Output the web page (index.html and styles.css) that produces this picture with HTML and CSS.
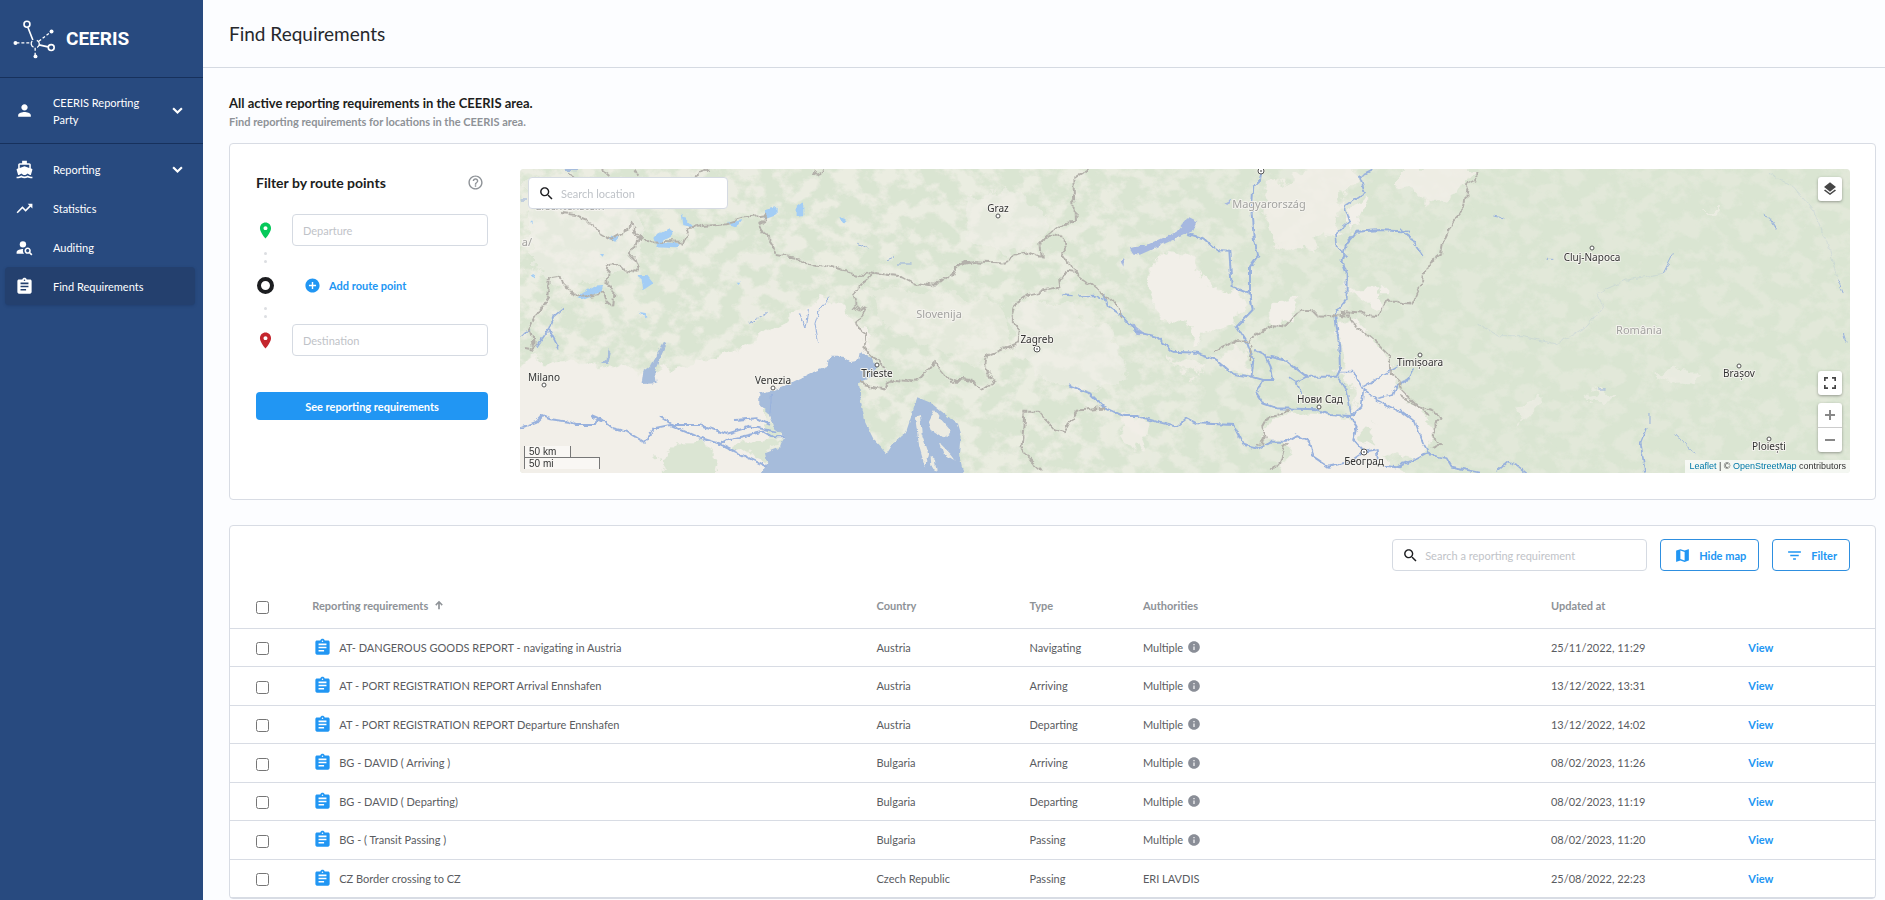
FILE: index.html
```html
<!DOCTYPE html>
<html lang="en">
<head>
  <meta charset="UTF-8" />
  <meta name="viewport" content="width=device-width, initial-scale=1.0" />
  <title>Find Requirements - CEERIS</title>
  <link rel="stylesheet" href="styles.css">
</head>
<body>
  <!-- icon set -->
  <svg class="sprite" aria-hidden="true">
    <symbol id="i-person" viewBox="0 0 24 24"><path d="M12 12c2.21 0 4-1.79 4-4s-1.79-4-4-4-4 1.79-4 4 1.79 4 4 4zm0 2c-2.67 0-8 1.34-8 4v2h16v-2c0-2.66-5.33-4-8-4z"/></symbol>
    <symbol id="i-chevron" viewBox="0 0 24 24"><path d="M16.59 8.09 12 12.67 7.41 8.09 5.5 10l6.5 6.5 6.5-6.5z"/></symbol>
    <symbol id="i-boat" viewBox="0 0 24 24"><path d="M20 21c-1.39 0-2.78-.47-4-1.32-2.44 1.71-5.56 1.71-8 0C6.78 20.53 5.39 21 4 21H2v2h2c1.38 0 2.74-.35 4-.99 2.52 1.29 5.48 1.29 8 0 1.26.65 2.62.99 4 .99h2v-2h-2zM3.95 19H4c1.6 0 3.02-.88 4-2 .98 1.12 2.4 2 4 2s3.02-.88 4-2c.98 1.12 2.4 2 4 2h.05l1.89-6.68c.08-.26.06-.54-.06-.78s-.34-.42-.6-.5L20 10.62V6c0-1.1-.9-2-2-2h-3V1H9v3H6c-1.1 0-2 .9-2 2v4.62l-1.29.42c-.26.08-.48.26-.6.5s-.15.52-.06.78L3.95 19zM6 6h12v3.97L12 8 6 9.97V6z"/></symbol>
    <symbol id="i-trend" viewBox="0 0 24 24"><path d="M16 6l2.29 2.29-4.88 4.88-4-4L2 16.59 3.41 18l6-6 4 4 6.3-6.29L22 12V6z"/></symbol>
    <symbol id="i-audit" viewBox="0 0 24 24"><circle cx="10" cy="8" r="4"/><path d="M10.35 14.01C7.62 13.91 2 15.27 2 18v2h9.54c-2.47-2.76-1.23-5.89-1.19-5.99zM19.43 18.02c.36-.59.57-1.28.57-2.02 0-2.21-1.79-4-4-4s-4 1.79-4 4 1.79 4 4 4c.74 0 1.43-.22 2.02-.57L20.59 22 22 20.59l-2.57-2.57zM16 18c-1.1 0-2-.9-2-2s.9-2 2-2 2 .9 2 2-.9 2-2 2z"/></symbol>
    <symbol id="i-report" viewBox="0 0 24 24"><path d="M19 3h-4.18C14.4 1.84 13.3 1 12 1c-1.3 0-2.4.84-2.82 2H5c-1.1 0-2 .9-2 2v14c0 1.1.9 2 2 2h14c1.1 0 2-.9 2-2V5c0-1.1-.9-2-2-2zm-7 0c.55 0 1 .45 1 1s-.45 1-1 1-1-.45-1-1 .45-1 1-1zm2 14H7v-2h7v2zm3-4H7v-2h10v2zm0-4H7V7h10v2z"/></symbol>
    <symbol id="i-pin" viewBox="0 0 24 24"><path d="M12 2C8.13 2 5 5.13 5 9c0 5.25 7 13 7 13s7-7.75 7-13c0-3.87-3.13-7-7-7zm0 9.5c-1.38 0-2.5-1.12-2.5-2.5s1.12-2.5 2.5-2.5 2.5 1.12 2.5 2.5-1.12 2.5-2.5 2.5z"/></symbol>
    <symbol id="i-help" viewBox="0 0 24 24"><path d="M11 18h2v-2h-2v2zm1-16C6.48 2 2 6.48 2 12s4.48 10 10 10 10-4.48 10-10S17.52 2 12 2zm0 18c-4.41 0-8-3.59-8-8s3.59-8 8-8 8 3.59 8 8-3.59 8-8 8zm0-14c-2.21 0-4 1.79-4 4h2c0-1.1.9-2 2-2s2 .9 2 2c0 2-3 1.75-3 5h2c0-2.25 3-2.5 3-5 0-2.21-1.79-4-4-4z"/></symbol>
    <symbol id="i-add" viewBox="0 0 24 24"><path d="M12 2C6.48 2 2 6.48 2 12s4.48 10 10 10 10-4.48 10-10S17.52 2 12 2zm5 11h-4v4h-2v-4H7v-2h4V7h2v4h4v2z"/></symbol>
    <symbol id="i-search" viewBox="0 0 24 24"><path d="M15.5 14h-.79l-.28-.27C15.41 12.59 16 11.11 16 9.5 16 5.91 13.09 3 9.5 3S3 5.91 3 9.5 5.91 16 9.5 16c1.61 0 3.09-.59 4.23-1.57l.27.28v.79l5 4.99L20.49 19l-4.99-5zm-6 0C7.01 14 5 11.99 5 9.5S7.01 5 9.5 5 14 7.01 14 9.5 11.99 14 9.5 14z"/></symbol>
    <symbol id="i-map" viewBox="0 0 24 24"><path d="M20.5 3l-.16.03L15 5.1 9 3 3.36 4.9c-.21.07-.36.25-.36.48V20.500c0 .28.22.5.5.5l.16-.03L9 18.900l6 2.100 5.640-1.900c.21-.07.36-.25.36-.48V3.500c0-.28-.22-.5-.5-.5zM15 19l-6-2.110V5l6 2.110V19z"/></symbol>
    <symbol id="i-filter" viewBox="0 0 24 24"><path d="M10 18h4v-2h-4v2zM3 6v2h18V6H3zm3 7h12v-2H6v2z"/></symbol>
    <symbol id="i-info" viewBox="0 0 24 24"><path d="M12 2C6.48 2 2 6.48 2 12s4.48 10 10 10 10-4.48 10-10S17.52 2 12 2zm1 15h-2v-6h2v6zm0-8h-2V7h2v2z"/></symbol>
    <symbol id="i-layers" viewBox="0 0 24 24"><path d="M11.99 18.540l-7.370-5.730L3 14.070l9 7 9-7-1.630-1.270-7.380 5.740zM12 16l7.360-5.730L21 9l-9-7-9 7 1.630 1.270L12 16z"/></symbol>
    <symbol id="i-full" viewBox="0 0 24 24"><path d="M3 3h6v2.500H5.500V9H3zM15 3h6v6h-2.500V5.500H15zM3 15h2.500v3.500H9V21H3zM18.500 15H21v6h-6v-2.500h3.500z"/></symbol>
    <symbol id="i-up" viewBox="0 0 24 24"><path d="M3 11l2.500 2.500L10 9V22h4V9l4.500 4.500L21 11l-9-9z"/></symbol>
  </svg>

  <aside class="sidebar">
    <a class="brand" href="#">
      <svg class="brand-mark" viewBox="40 52 130 122" aria-hidden="true">
        <g fill="none" stroke="#fff" stroke-width="5">
          <circle cx="82" cy="68" r="9"/>
          <circle cx="156" cy="139" r="9"/>
          <path d="M85 78l15 38M119 131l27 6"/>
          <path d="M50 125h44M118 120l36-28M107 140v22" stroke-dasharray="9 6" stroke-width="4"/>
          <path d="M98 119a12 12 0 0 0 4 19M112 117a12 12 0 0 1 1 22" stroke-width="4"/>
        </g>
        <g fill="#fff">
          <circle cx="47" cy="125" r="6"/>
          <circle cx="157" cy="90" r="6"/>
          <circle cx="108" cy="166" r="6"/>
        </g>
      </svg>
      <span class="brand-name">CEERIS</span>
    </a>

    <button class="account" type="button">
      <svg class="icon"><use href="#i-person"/></svg>
      <span class="nav-label">CEERIS Reporting Party</span>
      <svg class="icon"><use href="#i-chevron"/></svg>
    </button>

    <nav class="nav">
      <button class="nav-item" type="button">
        <svg class="icon"><use href="#i-boat"/></svg>
        <span class="nav-label">Reporting</span>
        <svg class="icon"><use href="#i-chevron"/></svg>
      </button>
      <a class="nav-item" href="#"><svg class="icon"><use href="#i-trend"/></svg><span class="nav-label">Statistics</span></a>
      <a class="nav-item" href="#"><svg class="icon"><use href="#i-audit"/></svg><span class="nav-label">Auditing</span></a>
      <a class="nav-item active" href="#"><svg class="icon"><use href="#i-report"/></svg><span class="nav-label">Find Requirements</span></a>
    </nav>
  </aside>

  <main class="main">
    <header class="page-header">
      <h1>Find Requirements</h1>
    </header>

    <div class="content">
      <h2 class="intro-title">All active reporting requirements in the CEERIS area.</h2>
      <p class="intro-text">Find reporting requirements for locations in the CEERIS area.</p>

      <section class="card route-card">
        <form class="route-form">
          <div class="route-head">
            <h3>Filter by route points</h3>
            <svg class="icon-sm help"><use href="#i-help"/></svg>
          </div>
          <div class="route-row">
            <svg class="icon pin-start"><use href="#i-pin"/></svg>
            <input class="field" type="text" placeholder="Departure" aria-label="Departure">
          </div>
          <div class="dots"><span></span><span></span></div>
          <div class="route-row">
            <span class="ring"></span>
            <button class="add-point" type="button">
              <svg class="icon-sm"><use href="#i-add"/></svg>
              Add route point
            </button>
          </div>
          <div class="dots"><span></span><span></span></div>
          <div class="route-row">
            <svg class="icon pin-end"><use href="#i-pin"/></svg>
            <input class="field" type="text" placeholder="Destination" aria-label="Destination">
          </div>
          <button class="submit" type="button">See reporting requirements</button>
        </form>

        <div class="map">
          <svg class="map-canvas" viewBox="0 0 1330 304" preserveAspectRatio="xMidYMid slice" role="img" aria-label="Map">
            <defs>
              <filter id="hills" x="0" y="0" width="100%" height="100%" color-interpolation-filters="sRGB">
                <feTurbulence type="fractalNoise" baseFrequency="0.05 0.06" numOctaves="5" seed="7"/>
                <feColorMatrix values="0 0 0 0 .95  0 0 0 0 .94  0 0 0 0 .91  5 0 0 0 -2.1"/>
              </filter>
              <filter id="rough" x="-10%" y="-10%" width="120%" height="120%">
                <feTurbulence type="fractalNoise" baseFrequency="0.02" numOctaves="5" seed="3"/>
                <feDisplacementMap in="SourceGraphic" scale="70" xChannelSelector="R" yChannelSelector="G"/>
              </filter>
              <filter id="coast" x="-5%" y="-5%" width="110%" height="110%">
                <feTurbulence type="fractalNoise" baseFrequency="0.05" numOctaves="3" seed="5"/>
                <feDisplacementMap in="SourceGraphic" scale="14" xChannelSelector="R" yChannelSelector="G"/>
              </filter>
              <linearGradient id="fade">
                <stop offset="0" stop-color="#bbb"/>
                <stop offset=".42" stop-color="#aaa"/>
                <stop offset=".55" stop-color="#777"/>
                <stop offset=".7" stop-color="#555"/>
                <stop offset="1" stop-color="#555"/>
              </linearGradient>
              <mask id="west"><rect width="1330" height="304" fill="url(#fade)"/></mask>
            </defs>

            <rect width="1330" height="304" fill="#dae5d2"/>
            <g mask="url(#west)"><rect width="1330" height="304" filter="url(#hills)"/></g>

            <!-- plains -->
            <g transform="translate(-10 -9) scale(.3333)" fill="#f2efe9" filter="url(#rough)">
              <path d="M0 600L120 610 300 620 400 640 560 610 700 560 800 510 860 450 930 415 1010 440 1060 520 1070 600 900 680 770 720 780 980H0z"/>
              <path d="M60 60L330 70 400 200 370 320 200 380 60 330z" opacity=".5"/>
              <path d="M1080 380L1300 400 1480 440 1500 560 1400 620 1250 560 1120 500z" opacity=".4"/>
              <path d="M470 980L450 900 500 850 580 850 640 890 620 980zM660 870L700 840 810 835 800 870 770 900 720 885z" fill="#dbe5d3"/>
            </g>
            <g transform="translate(430 -9) scale(.3333)" fill="#f2efe9" filter="url(#rough)">
              <path d="M590 330L640 280 730 290 760 370 880 400 860 490 720 560 740 490 630 480z"/>
              <path d="M950 80L1100 20 1230 20 1180 120 1160 220 1060 270 1000 270 940 150z" opacity=".8"/>
              <path d="M970 430L1040 410 1030 480 960 490zM1200 380L1300 375 1300 440 1220 440zM1190 150L1240 110 1235 170 1200 210z"/>
              <path d="M1175 470L1220 490 1320 590 1320 650 1380 710 1440 770 1445 850 1390 900 1300 880 1380 960 1000 960 1010 850 940 840 960 770 1200 770 1220 700 1170 640z"/>
              <path d="M190 450L340 420 480 520 550 640 420 700 250 640 190 560zM40 120L220 90 300 200 200 290 60 250z" opacity=".5"/>
              <path d="M650 590L760 620 740 660 670 630zM800 600L850 550 890 560 900 640 840 630zM520 760L600 770 580 880 530 850z" opacity=".8"/>
              <path d="M1230 800L1280 800 1270 850 1230 840z" fill="#dbe5d3"/>
              <path d="M1350 20L1580 20 1530 100 1470 130 1350 80z" opacity=".8"/>
            </g>
            <g transform="translate(880 -9) scale(.3333)" fill="#efeee6" filter="url(#rough)" opacity=".7">
              <path d="M750 640L820 620 900 640 890 670 800 660zM550 710L620 690 640 710 580 725zM350 740L420 710 430 725 350 800zM900 150L960 150 940 165z"/>
            </g>

            <!-- sea, lakes -->
            <g transform="translate(-10 -9) scale(.3333)" fill="#a6bcdb" filter="url(#coast)">
              <path d="M742 960L772 910 765 880 805 865 825 830 790 800 775 760 748 735 748 700 790 690 850 665 900 640 950 622 960 590 1000 590 1020 603 1048 598 1052 578 1088 592 1102 628 1085 652 1047 667 1052 720 1067 790 1092 840 1130 882 1150 850 1187 820 1207 760 1222 712 1262 728 1292 752 1340 790 1352 830 1347 880 1365 960z"/>
              <path d="M462 545L470 550 435 630 440 670 395 672 400 635 420 620zM292 568L302 580 295 612 276 612 290 600z"/>
              <path d="M160 20L205 20 200 34 165 33z"/>
            </g>
            <g transform="translate(-10 -9) scale(.3333)" fill="#ecebe2" filter="url(#coast)">
              <path d="M1215 770L1230 765 1235 820 1255 880 1245 920 1228 860zM1255 790L1275 750 1295 780 1325 815 1300 835 1262 810zM1290 850L1325 885 1340 905 1300 880zM1262 890L1275 900 1280 935 1265 925z"/>
            </g>
            <g transform="translate(-10 -9) scale(.3333)" fill="#a3cdf5" filter="url(#coast)">
              <path d="M430 230L480 205 485 225 455 245 505 250 500 265 440 262zM290 232L330 228 315 245zM515 160L530 180 555 205 520 195zM650 190L695 180 680 200zM765 150L800 140 800 165 765 178zM860 140L880 125 880 165 860 168zM985 170L1010 180 1000 190zM375 345L410 345 430 370 400 390 395 360zM200 410L250 380 278 378 275 395 215 418zM385 455L410 460 412 475zM60 185l8 0 0 8zM65 345l14-4-6 14zM270 285l12 0-4 8zM680 365l10 0-3 8z"/>
            </g>
            <g transform="translate(430 -9) scale(.3333)" fill="#a6b8e0" filter="url(#coast)">
              <path d="M540 265L600 252 680 215 715 172 742 185 730 212 690 230 620 262 570 284 545 280zM822 128L848 114 830 134zM545 490L590 524 560 526zM512 300l12-6-4 26z"/>
            </g>

            <!-- rivers -->
            <g transform="translate(-10 -9) scale(.3333)" fill="none" stroke="#98b1dd" stroke-width="6" filter="url(#coast)">
              <path d="M30 805L80 785 95 768 120 778 175 785 200 795 255 795 270 775 310 805 350 815 405 848 430 805 480 795 560 830 625 850 690 882 770 920M450 770L490 795 570 795 650 822 720 800 800 815M625 855L650 840 760 815 790 832 825 832M240 768L280 785M675 780L740 775 780 795"/>
              <path d="M160 445L130 470 115 510 80 560M118 510L148 568M35 530L60 505" stroke-width="5"/>
              <path d="M960 410L930 445 915 490 925 545M895 450L885 505 868 460M1045 250l30 15M1130 300l25-10M1160 312l45 0M715 490l55-30M32 120l16 0M785 700l-5 60" stroke-width="3"/>
            </g>
            <g transform="translate(430 -9) scale(.3333)" fill="none" stroke="#98b1dd" stroke-width="6" filter="url(#coast)">
              <path d="M935 30L930 60 910 80 905 160 912 240 925 285 900 320 900 400 908 450 860 500 890 545 910 600 905 650"/>
              <path d="M715 222L760 235 800 270 838 272 845 380 900 402"/>
              <path d="M460 405L470 435 520 470 560 515 620 530 670 575 740 578 800 600 850 642 905 650 940 660 970 660 962 620 945 585 915 570M950 588L1010 603 1070 650 1160 650 1170 630 1168 560 1155 460 1190 415 1190 340 1175 300 1190 250 1220 215 1290 210 1380 215M940 660L920 700 940 730 980 745 1100 748 1140 765 1200 768 1220 800 1210 840 1242 876 1280 868 1285 915 1340 922 1380 905"/>
              <path d="M355 675L420 700 460 740 520 768 560 768 620 785 680 800 710 775 740 790 850 795 880 855 930 865 960 845 1005 845 1040 825 1080 845 1090 890 1135 920 1200 905 1242 876"/>
              <path d="M1270 30L1230 50 1245 100 1185 140 1200 185 1155 225 1160 260 1190 290M1165 635L1210 635 1240 690 1280 720 1380 770M1345 620L1240 680M1240 690L1235 740 1205 768 1190 690 1165 650M1285 715L1330 705 1340 680 1380 655M1070 650L1040 665 1055 705M1020 652L1040 665" stroke-width="5"/>
              <path d="M340 405l25 2M385 408l45-2 30 12" stroke-width="4"/>
            </g>
            <g transform="translate(880 -9) scale(.3333)" fill="none" stroke="#98b1dd" stroke-width="6" filter="url(#coast)">
              <path d="M0 750L45 785 70 850 90 885 140 895 155 920 240 938M0 912L45 900 90 875M290 935L325 905 350 915 380 940M735 938L722 850 738 808M0 672L20 665 40 625M0 210L30 230 68 285" stroke-width="5"/>
              <path d="M280 168l30 5M1088 165L1110 175 1130 208M1312 355L1330 400M1330 520l8 25M750 760l0 35M825 820L885 880M595 687l22 0M820 280L790 340M440 298l20 0" stroke-width="3"/>
              <path d="M230 490L300 530 370 530 470 552 560 500 610 440 590 400 680 360 790 340M1110 40L1180 80 1240 150 1290 270 1310 350" stroke-width="2" opacity=".3"/>
            </g>

            <!-- borders -->
            <g fill="none" stroke="#b3b0aa" stroke-width="6" stroke-dasharray="18 2" filter="url(#coast)">
              <g transform="translate(-10 -9) scale(.3333)">
                <path d="M165 165L200 170 250 190 262 215 305 240 340 220 350 200 370 192 385 220 370 290 385 330 345 325 330 310 295 325 290 365 315 385 310 430 290 432 280 400 200 412 165 390 155 350 120 355 115 410 80 470 60 510 70 560 45 555"/>
                <path d="M390 240L510 245 525 205 580 195 650 190 700 175 760 165 745 195 780 245 800 285 900 305 1000 330 1090 345 1180 355 1210 370 1275 380 1310 350 1350 310 1400 300"/>
                <path d="M1090 345L1050 380 1018 410 1025 438 1075 455 1040 500 1070 520 1060 565 1100 590 1130 625M1050 668L1120 685 1160 660 1230 665 1278 612 1310 650 1345 662 1400 672"/>
                <path d="M180 28L200 48M275 28L298 48M370 28L385 50M905 28L925 38 945 30M560 50L590 30" />
              </g>
              <g transform="translate(430 -9) scale(.3333)">
                <path d="M415 30L370 60 375 185 335 190 268 245 272 295 235 280 160 305 50 300 15 320 0 350M268 245L300 232 340 235 345 275 380 340 350 335 325 350 328 382 250 400 190 440 182 470 205 495 200 550 115 585 108 625 130 665 95 688 60 665 0 665M380 345L430 380 460 405 500 440 525 465M785 585L850 535 890 548 900 530 960 495 1010 500 1050 455 1150 460 1200 465 1220 500 1290 560 1320 590 1320 650 1380 710 1440 770M1170 455L1290 465 1310 425 1380 425"/>
                <path d="M465 745L380 755 345 820 310 810 265 755 220 755 212 860 240 900 280 938M1020 755L960 765 940 800 950 835 925 850M1005 850L995 900 965 938M905 600L895 555"/>
              </g>
              <g transform="translate(880 -9) scale(.3333)">
                <path d="M235 30L235 65 205 80 195 140 155 185 125 250 120 290 80 320 75 370 55 380 35 428 0 425M0 705L50 735 120 760 128 775 90 815 130 850 90 865"/>
              </g>
            </g>

            <!-- labels -->
            <g class="region-label">
              <text x="50" y="41">Liechtenstein</text>
              <text x="7" y="77">a/</text>
              <text x="419" y="149">Slovenija</text>
              <text x="749" y="39">Magyarország</text>
              <text x="1119" y="165">România</text>
            </g>
            <g class="town-dot">
              <circle cx="24" cy="216" r="2"/><circle cx="253" cy="219" r="2"/><circle cx="357" cy="196" r="2"/>
              <circle cx="478" cy="47" r="2"/><circle cx="799" cy="238" r="2"/><circle cx="900" cy="186" r="2"/>
              <circle cx="1072" cy="79" r="2"/><circle cx="1219" cy="197" r="2"/><circle cx="1249" cy="270" r="2"/>
            </g>
            <g class="capital-dot">
              <circle cx="741" cy="2" r="3"/><circle cx="517" cy="180" r="3"/><circle cx="844" cy="283" r="3"/>
              <circle cx="741" cy="2" r=".5"/><circle cx="517" cy="180" r=".5"/><circle cx="844" cy="283" r=".5"/>
            </g>
            <g class="town-label">
              <text x="24" y="212">Milano</text>
              <text x="253" y="215">Venezia</text>
              <text x="357" y="208">Trieste</text>
              <text x="478" y="43">Graz</text>
              <text x="517" y="174">Zagreb</text>
              <text x="800" y="234">Нови Сад</text>
              <text x="844" y="296">Београд</text>
              <text x="900" y="197">Timișoara</text>
              <text x="1072" y="92">Cluj-Napoca</text>
              <text x="1219" y="208">Brașov</text>
              <text x="1249" y="281">Ploiești</text>
            </g>
          </svg>

          <label class="search map-search">
            <svg class="icon-sm"><use href="#i-search"/></svg>
            <input type="text" placeholder="Search location" aria-label="Search location">
          </label>
          <button class="map-btn map-layers" type="button" aria-label="Layers"><svg><use href="#i-layers"/></svg></button>
          <div class="map-tools">
            <button class="map-btn" type="button" aria-label="Full screen"><svg><use href="#i-full"/></svg></button>
            <div class="zoom">
              <button type="button" aria-label="Zoom in"><svg viewBox="0 0 12 12"><path d="M1 6h10M6 1v10"/></svg></button>
              <button type="button" aria-label="Zoom out"><svg viewBox="0 0 12 12"><path d="M1 6h10"/></svg></button>
            </div>
          </div>
          <div class="scale">
            <div class="scale-km">50 km</div>
            <div class="scale-mi">50 mi</div>
          </div>
          <div class="attribution"><a href="#">Leaflet</a> | © <a href="#">OpenStreetMap</a> contributors</div>
        </div>
      </section>

      <section class="card list-card">
        <div class="toolbar">
          <label class="search">
            <svg class="icon-sm"><use href="#i-search"/></svg>
            <input type="text" placeholder="Search a reporting requirement" aria-label="Search a reporting requirement">
          </label>
          <button class="tool-btn" type="button"><svg class="icon-sm"><use href="#i-map"/></svg>Hide map</button>
          <button class="tool-btn" type="button"><svg class="icon-sm"><use href="#i-filter"/></svg>Filter</button>
        </div>

        <table class="table">
          <colgroup>
            <col class="c-check"><col class="c-name"><col class="c-country"><col class="c-type"><col class="c-auth"><col class="c-date"><col>
          </colgroup>
          <thead>
            <tr>
              <th><input type="checkbox" aria-label="Select all"></th>
              <th>Reporting requirements <svg class="sort"><use href="#i-up"/></svg></th>
              <th>Country</th>
              <th>Type</th>
              <th>Authorities</th>
              <th>Updated at</th>
              <th></th>
            </tr>
          </thead>
          <tbody>
            <tr>
              <td><input type="checkbox" aria-label="Select row"></td>
              <td><div class="name"><svg><use href="#i-report"/></svg>AT- DANGEROUS GOODS REPORT - navigating in Austria</div></td>
              <td>Austria</td>
              <td>Navigating</td>
              <td><div class="auth">Multiple <svg><use href="#i-info"/></svg></div></td>
              <td>25/11/2022, 11:29</td>
              <td><a href="#">View</a></td>
            </tr>
            <tr>
              <td><input type="checkbox" aria-label="Select row"></td>
              <td><div class="name"><svg><use href="#i-report"/></svg>AT - PORT REGISTRATION REPORT Arrival Ennshafen</div></td>
              <td>Austria</td>
              <td>Arriving</td>
              <td><div class="auth">Multiple <svg><use href="#i-info"/></svg></div></td>
              <td>13/12/2022, 13:31</td>
              <td><a href="#">View</a></td>
            </tr>
            <tr>
              <td><input type="checkbox" aria-label="Select row"></td>
              <td><div class="name"><svg><use href="#i-report"/></svg>AT - PORT REGISTRATION REPORT Departure Ennshafen</div></td>
              <td>Austria</td>
              <td>Departing</td>
              <td><div class="auth">Multiple <svg><use href="#i-info"/></svg></div></td>
              <td>13/12/2022, 14:02</td>
              <td><a href="#">View</a></td>
            </tr>
            <tr>
              <td><input type="checkbox" aria-label="Select row"></td>
              <td><div class="name"><svg><use href="#i-report"/></svg>BG - DAVID ( Arriving )</div></td>
              <td>Bulgaria</td>
              <td>Arriving</td>
              <td><div class="auth">Multiple <svg><use href="#i-info"/></svg></div></td>
              <td>08/02/2023, 11:26</td>
              <td><a href="#">View</a></td>
            </tr>
            <tr>
              <td><input type="checkbox" aria-label="Select row"></td>
              <td><div class="name"><svg><use href="#i-report"/></svg>BG - DAVID ( Departing)</div></td>
              <td>Bulgaria</td>
              <td>Departing</td>
              <td><div class="auth">Multiple <svg><use href="#i-info"/></svg></div></td>
              <td>08/02/2023, 11:19</td>
              <td><a href="#">View</a></td>
            </tr>
            <tr>
              <td><input type="checkbox" aria-label="Select row"></td>
              <td><div class="name"><svg><use href="#i-report"/></svg>BG - ( Transit Passing )</div></td>
              <td>Bulgaria</td>
              <td>Passing</td>
              <td><div class="auth">Multiple <svg><use href="#i-info"/></svg></div></td>
              <td>08/02/2023, 11:20</td>
              <td><a href="#">View</a></td>
            </tr>
            <tr>
              <td><input type="checkbox" aria-label="Select row"></td>
              <td><div class="name"><svg><use href="#i-report"/></svg>CZ Border crossing to CZ</div></td>
              <td>Czech Republic</td>
              <td>Passing</td>
              <td>ERI LAVDIS</td>
              <td>25/08/2022, 22:23</td>
              <td><a href="#">View</a></td>
            </tr>
          </tbody>
        </table>
      </section>
    </div>
  </main>
</body>
</html>
```
FILE: styles.css
```css
* {
  box-sizing: border-box;
}
body {
  margin: 0;
  display: flex;
  height: 100vh;
  overflow: hidden;
  font-family: Lato, sans-serif;
  font-size: 11px;
  color: #5a5c5f;
  background: #fcfdff;
}
button, input {
  font-family: inherit;
  font-size: inherit;
}
button {
  border: none;
  background: none;
  padding: 0;
  cursor: pointer;
}
a {
  text-decoration: none;
}
svg {
  fill: currentColor;
  flex-shrink: 0;
}
.sprite {
  display: none;
}
.icon {
  width: 19px;
  height: 19px;
}
.icon-sm {
  width: 17px;
  height: 17px;
}

/* sidebar */
.sidebar {
  width: 203px;
  flex-shrink: 0;
  background: #284a7f;
  color: #fff;
}
.brand {
  display: flex;
  align-items: center;
  gap: 10px;
  height: 78px;
  padding-left: 13px;
  border-bottom: 1px solid #17315c;
  color: #fff;
}
.brand-mark {
  width: 43px;
  height: 40px;
}
.brand-name {
  font-family: Roboto, sans-serif;
  font-size: 19px;
  font-weight: bold;
}
.account, .nav-item {
  display: flex;
  align-items: center;
  width: 100%;
  color: #fff;
  text-align: left;
}
.account {
  height: 66px;
  padding: 0 16px 0 15px;
  border-bottom: 1px solid #17315c;
  line-height: 17px;
}
.nav {
  display: flex;
  flex-direction: column;
  gap: 1px;
  padding: 6px 8px 0 5px;
}
.nav-item {
  height: 38px;
  padding: 0 8px 0 10px;
  border-radius: 4px;
}
.nav-item.active {
  background: #24406e;
  box-shadow: 0 1px 3px rgba(20, 40, 80, 0.3);
}
.nav-label {
  flex: 1;
  margin-left: 19px;
}
.account .nav-label {
  padding-right: 16px;
}

/* page */
.main {
  flex: 1;
  min-width: 0;
}
.page-header {
  display: flex;
  align-items: center;
  height: 68px;
  padding-left: 26px;
  border-bottom: 1px solid #d5dae2;
}
h1 {
  margin: 0;
  font-size: 19px;
  font-weight: 400;
  color: #26282c;
}
.content {
  padding: 26px 9px 0 26px;
}
.intro-title {
  margin: 0;
  font-size: 13px;
  line-height: 19px;
  font-weight: 700;
  color: #1c1d20;
}
.intro-text {
  margin: 0 0 12px;
  line-height: 18px;
  font-weight: 700;
  color: #8e9297;
}
.card {
  background: #fff;
  border: 1px solid #d8dce4;
  border-radius: 4px;
}

/* route filter */
.route-card {
  display: flex;
  gap: 32px;
  height: 357px;
  padding: 25px 25px 25px 26px;
  margin-bottom: 25px;
}
.route-form {
  width: 232px;
  flex-shrink: 0;
}
.route-head {
  display: flex;
  align-items: center;
  justify-content: space-between;
  height: 26px;
  padding-right: 4px;
  margin-bottom: 19px;
}
.route-head h3 {
  margin: 0;
  font-size: 14px;
  font-weight: 700;
  color: #1c1d20;
}
.help {
  color: #8e9297;
}
.route-row {
  display: flex;
  align-items: center;
  height: 32px;
}
.pin-start {
  color: #06c95a;
}
.pin-end {
  color: #c4262e;
}
.ring {
  width: 17px;
  height: 17px;
  margin: 0 1px;
  border: 4px solid #1c1d20;
  border-radius: 50%;
}
.dots {
  display: flex;
  flex-direction: column;
  align-items: center;
  justify-content: center;
  gap: 5px;
  width: 19px;
  height: 23px;
}
.dots span {
  width: 3px;
  height: 3px;
  border-radius: 50%;
  background: #dcdee2;
}
.field {
  flex: 1;
  min-width: 0;
  height: 32px;
  margin-left: 17px;
  padding: 0 10px;
  border: 1px solid #d5dae2;
  border-radius: 4px;
  background: #fff;
  outline: none;
}
input::placeholder {
  color: #bfc3c8;
  opacity: 1;
}
.add-point {
  display: flex;
  align-items: center;
  gap: 8px;
  margin-left: 29px;
  font-weight: 700;
  color: #2196f3;
}
.submit {
  width: 100%;
  height: 28px;
  margin-top: 36px;
  border-radius: 4px;
  background: #2196f3;
  color: #fff;
  font-weight: 700;
}

/* map */
.map {
  position: relative;
  flex: 1;
  min-width: 0;
  height: 304px;
  border-radius: 4px;
  overflow: hidden;
}
.map-canvas {
  display: block;
  width: 100%;
  height: 100%;
}
.region-label, .town-label {
  font-family: "Noto Sans", sans-serif;
  text-anchor: middle;
  paint-order: stroke;
  stroke: #f4f3ee;
  stroke-width: 2px;
  stroke-linejoin: round;
}
.region-label {
  font-size: 11px;
  fill: #a3a3a0;
}
.town-label {
  font-size: 10px;
  fill: #333;
}
.town-dot, .capital-dot {
  fill: #fff;
  stroke: #555;
  stroke-width: 1px;
}
.search {
  display: flex;
  align-items: center;
  gap: 6px;
  width: 255px;
  height: 32px;
  padding: 0 9px;
  border: 1px solid #d5dae2;
  border-radius: 4px;
  background: #fff;
  color: #1c1d20;
}
.search input {
  flex: 1;
  min-width: 0;
  padding: 0;
  border: none;
  outline: none;
  background: none;
}
.map-search {
  position: absolute;
  top: 8px;
  left: 8px;
  width: 200px;
}
.map-btn {
  display: flex;
  align-items: center;
  justify-content: center;
  width: 24px;
  height: 24px;
  border-radius: 3px;
  background: #fff;
  color: #464646;
  box-shadow: 0 1px 3px rgba(0, 0, 0, 0.35);
}
.map-btn svg {
  width: 16px;
  height: 16px;
}
.map-layers {
  position: absolute;
  top: 8px;
  right: 8px;
}
.map-tools {
  position: absolute;
  right: 8px;
  bottom: 21px;
  display: flex;
  flex-direction: column;
  gap: 8px;
}
.zoom {
  border-radius: 3px;
  background: #fff;
  box-shadow: 0 1px 3px rgba(0, 0, 0, 0.35);
}
.zoom button {
  display: flex;
  align-items: center;
  justify-content: center;
  width: 24px;
  height: 24px;
}
.zoom button + button {
  height: 25px;
  border-top: 1px solid #ccc;
}
.zoom svg {
  width: 12px;
  height: 12px;
  stroke: #888;
  stroke-width: 2px;
}
.scale {
  position: absolute;
  left: 4px;
  bottom: 4px;
  font-family: "Liberation Sans", sans-serif;
  font-size: 10px;
  line-height: 11px;
  color: #333;
}
.scale div {
  padding-left: 4px;
  border: 1px solid #777;
  border-top: none;
  background: rgba(255, 255, 255, 0.5);
}
.scale-km {
  width: 47px;
}
.scale .scale-mi {
  width: 76px;
  border-top: 1px solid #777;
  border-bottom: none;
  margin-top: -1px;
}
.attribution {
  position: absolute;
  right: 0;
  bottom: 0;
  padding: 0 4px;
  font-family: "Liberation Sans", sans-serif;
  font-size: 9px;
  line-height: 13px;
  color: #333;
  background: rgba(255, 255, 255, 0.7);
}
.attribution a {
  color: #0078a8;
}

/* list */
.toolbar {
  display: flex;
  justify-content: flex-end;
  gap: 13px;
  padding: 13px 25px 0;
}
.tool-btn {
  display: flex;
  align-items: center;
  gap: 8px;
  height: 32px;
  padding: 0 12px 0 13px;
  border: 1px solid #2e8fe0;
  border-radius: 4px;
  background: #fff;
  color: #2196f3;
  font-weight: 700;
}
.table {
  width: 100%;
  table-layout: fixed;
  border-collapse: collapse;
}
.c-check {
  width: 5%;
}
.c-name {
  width: 34.3%;
}
.c-country {
  width: 9.3%;
}
.c-type {
  width: 6.9%;
}
.c-auth {
  width: 24.8%;
}
.c-date {
  width: 12%;
}
.table th, .table td {
  padding: 0;
  border-bottom: 1px solid #d8dce4;
  text-align: left;
  white-space: nowrap;
}
.table th {
  height: 57px;
  padding-top: 13px;
  color: #8e9297;
}
.table td {
  height: 38px;
}
.table tr:nth-child(even) td {
  height: 39px;
}
.table th:first-child, .table td:first-child {
  padding-left: 26px;
}
.table input {
  display: block;
  width: 13px;
  height: 13px;
  margin: 3px 0 0;
}
.table a {
  color: #2196f3;
  font-weight: 700;
}
.sort {
  width: 10px;
  height: 10px;
  margin-left: 3px;
}
.name, .auth {
  display: flex;
  align-items: center;
}
.name {
  gap: 7px;
  padding-left: 1px;
}
.name svg {
  width: 19px;
  height: 19px;
  color: #2196f3;
}
.auth {
  gap: 4px;
}
.auth svg {
  width: 14px;
  height: 14px;
  color: #8a8e97;
}
```
